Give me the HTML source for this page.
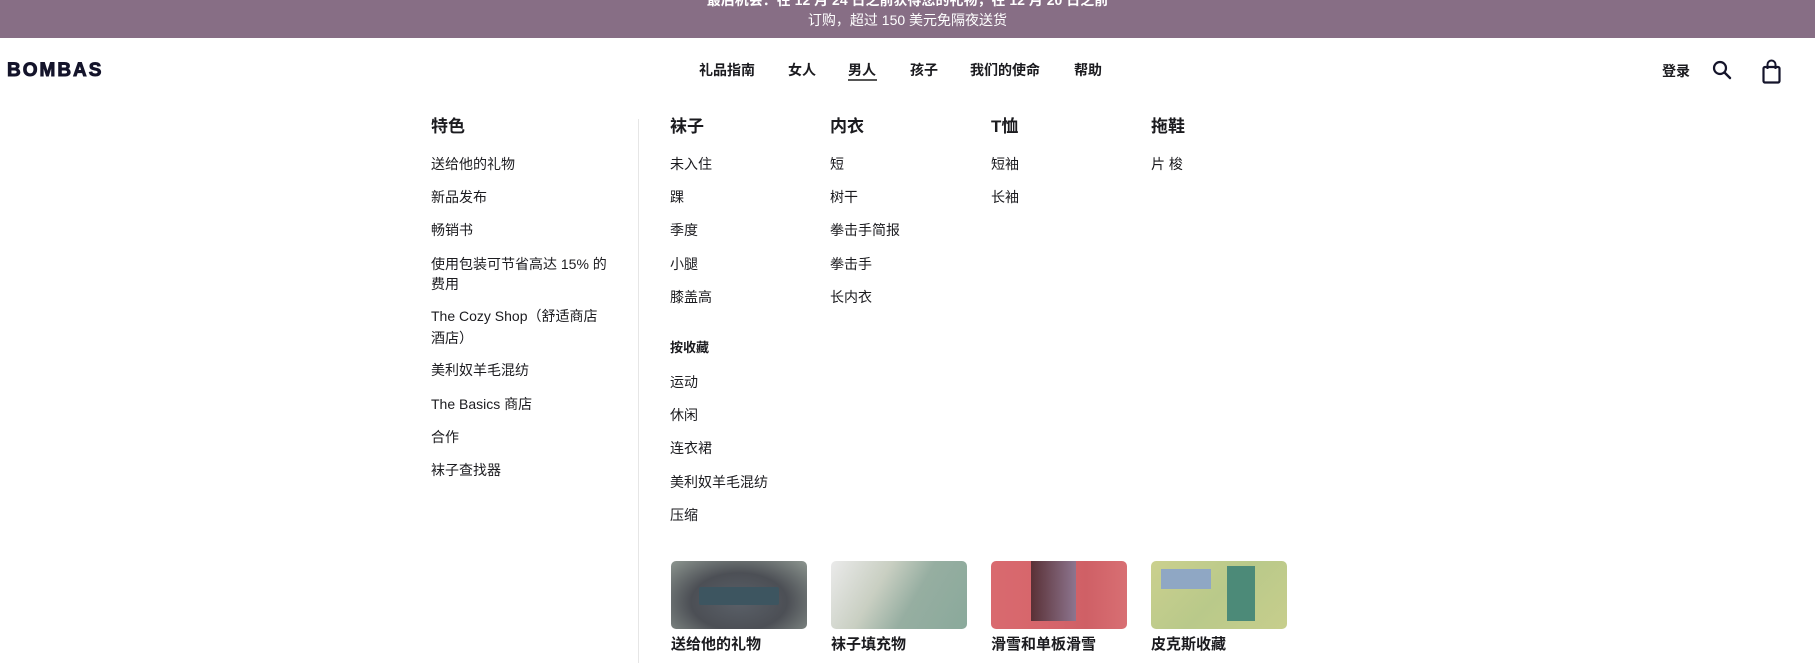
<!DOCTYPE html>
<html><head><meta charset="utf-8"><style>
*{margin:0;padding:0;box-sizing:border-box}
body{width:1815px;height:663px;overflow:hidden;background:#fff;font-family:"Liberation Sans","Noto Sans CJK SC",sans-serif;color:#1b1b1f;position:relative}
.a{position:absolute;white-space:nowrap;line-height:1}
.banner{position:absolute;left:0;top:0;width:1815px;height:38px;background:#876e85;color:#fff;font-size:14px}
.nav{font-size:14px;font-weight:bold;top:63px}
.h{font-size:17px;font-weight:bold}
.i{font-size:14px}
.img{position:absolute;top:561px;width:136px;height:68px;border-radius:5px;overflow:hidden}
.cap{font-size:15px;font-weight:bold;top:637px}
</style></head><body>
<div class="banner">
<div class="a" style="left:0;width:1815px;text-align:center;top:-7px;font-weight:bold">最后机会：在 12 月 24 日之前获得您的礼物，在 12 月 20 日之前</div>
<div class="a" style="left:0;width:1815px;text-align:center;top:13px">订购，超过 150 美元免隔夜送货</div>
</div>
<div class="a" style="left:7px;top:61px;font-size:19px;font-weight:bold;letter-spacing:2px;color:#14142b;-webkit-text-stroke:0.9px #14142b">BOMBAS</div>
<div class="a nav" style="left:699px">礼品指南</div>
<div class="a nav" style="left:788px">女人</div>
<div class="a nav" style="left:848px">男人</div>
<div style="position:absolute;left:848px;top:79px;width:29px;height:2px;background:#555"></div>
<div class="a nav" style="left:910px">孩子</div>
<div class="a nav" style="left:970px">我们的使命</div>
<div class="a nav" style="left:1074px">帮助</div>
<div class="a nav" style="left:1662px;top:64px">登录</div>
<svg style="position:absolute;left:1710px;top:59px" width="26" height="24" viewBox="0 0 26 24"><circle cx="10" cy="9" r="6" fill="none" stroke="#14142b" stroke-width="2.2"/><path d="M14.5 13.5 L20 19" stroke="#14142b" stroke-width="2.4" stroke-linecap="round"/></svg>
<svg style="position:absolute;left:1760px;top:59px" width="24" height="26" viewBox="0 0 24 26"><rect x="3.5" y="8" width="16" height="15.5" rx="1.5" fill="none" stroke="#14142b" stroke-width="2.2"/><path d="M7.5 10 V5.5 a4 4 0 0 1 8 0 V10" fill="none" stroke="#14142b" stroke-width="2"/></svg>

<div style="position:absolute;left:638px;top:119px;width:1px;height:544px;background:#e6e6e6"></div>

<div class="a h" style="left:431px;top:118px">特色</div>
<div class="a i" style="left:431px;top:157px">送给他的礼物</div>
<div class="a i" style="left:431px;top:190px">新品发布</div>
<div class="a i" style="left:431px;top:223px">畅销书</div>
<div class="a i" style="left:431px;top:257px">使用包装可节省高达 15% 的</div>
<div class="a i" style="left:431px;top:277px">费用</div>
<div class="a i" style="left:431px;top:309px">The Cozy Shop（舒适商店</div>
<div class="a i" style="left:431px;top:331px">酒店）</div>
<div class="a i" style="left:431px;top:363px">美利奴羊毛混纺</div>
<div class="a i" style="left:431px;top:397px">The Basics 商店</div>
<div class="a i" style="left:431px;top:430px">合作</div>
<div class="a i" style="left:431px;top:463px">袜子查找器</div>

<div class="a h" style="left:670px;top:118px">袜子</div>
<div class="a i" style="left:670px;top:157px">未入住</div>
<div class="a i" style="left:670px;top:190px">踝</div>
<div class="a i" style="left:670px;top:223px">季度</div>
<div class="a i" style="left:670px;top:257px">小腿</div>
<div class="a i" style="left:670px;top:290px">膝盖高</div>
<div class="a" style="left:670px;top:341px;font-size:13px;font-weight:bold">按收藏</div>
<div class="a i" style="left:670px;top:375px">运动</div>
<div class="a i" style="left:670px;top:408px">休闲</div>
<div class="a i" style="left:670px;top:441px">连衣裙</div>
<div class="a i" style="left:670px;top:475px">美利奴羊毛混纺</div>
<div class="a i" style="left:670px;top:508px">压缩</div>

<div class="a h" style="left:830px;top:118px">内衣</div>
<div class="a i" style="left:830px;top:157px">短</div>
<div class="a i" style="left:830px;top:190px">树干</div>
<div class="a i" style="left:830px;top:223px">拳击手简报</div>
<div class="a i" style="left:830px;top:257px">拳击手</div>
<div class="a i" style="left:830px;top:290px">长内衣</div>

<div class="a h" style="left:991px;top:118px">T恤</div>
<div class="a i" style="left:991px;top:157px">短袖</div>
<div class="a i" style="left:991px;top:190px">长袖</div>

<div class="a h" style="left:1151px;top:118px">拖鞋</div>
<div class="a i" style="left:1151px;top:157px">片 梭</div>

<div class="img" style="left:671px;background:radial-gradient(ellipse at 50% 60%,#5a6068 0%,#4c4f55 50%,#8d9690 100%)"><div style="position:absolute;left:28px;top:26px;width:80px;height:18px;background:#3d5560;border-radius:2px"></div></div>
<div class="img" style="left:831px;background:linear-gradient(120deg,#eaeaea 0%,#c9cfc2 35%,#96aea1 60%,#8aa99b 100%)"></div>
<div class="img" style="left:991px;background:linear-gradient(90deg,#d96a6f 0%,#d6656b 40%,#cf6066 70%,#d86f73 100%)"><div style="position:absolute;left:40px;top:0;width:45px;height:60px;background:linear-gradient(90deg,#3a2328,#7c7a99);opacity:.8"></div></div>
<div class="img" style="left:1151px;background:linear-gradient(135deg,#cbd08e 0%,#b9c98a 50%,#c7ce8c 100%)"><div style="position:absolute;left:10px;top:8px;width:50px;height:20px;background:#8fa7c4"></div><div style="position:absolute;left:76px;top:5px;width:28px;height:55px;background:#4c8a78"></div></div>

<div class="a cap" style="left:671px">送给他的礼物</div>
<div class="a cap" style="left:831px">袜子填充物</div>
<div class="a cap" style="left:991px">滑雪和单板滑雪</div>
<div class="a cap" style="left:1151px">皮克斯收藏</div>
</body></html>
